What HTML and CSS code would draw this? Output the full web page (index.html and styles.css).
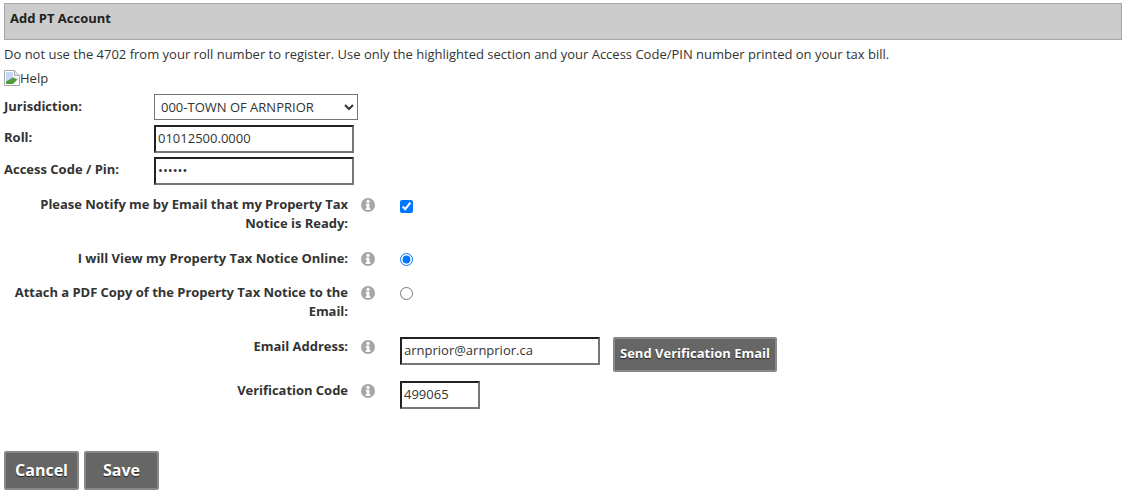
FILE: index.html
```html
<!DOCTYPE html>
<html lang="en">
<head>
<meta charset="utf-8">
<title>Add PT Account</title>
<link rel="stylesheet" href="styles.css">
</head>
<body>
<form class="page">
  <div class="title-bar">Add PT Account</div>
  <p class="note">Do not use the 4702 from your roll number to register. Use only the highlighted section and your Access Code/PIN number printed on your tax bill.</p>
  <div class="help">
    <svg class="broken" width="16" height="16" viewBox="0 0 16 16"><path d="M.5.500h10l5 5v10H.5z" fill="#fff" stroke="#a9a9a9"/><path d="M10.500.500v5h5" fill="#e8e8e8" stroke="#a9a9a9"/><path d="M2 2h7v5l5 1v3H2z" fill="#c8d8f4"/><path d="M2 14v-2.500l7-4 5 2.500v4z" fill="#4f9a3a"/><path d="M8 15l7-7v7z" fill="#fff"/></svg><span>Help</span>
  </div>
  <div class="basic-row first">
    <label class="basic-label">Jurisdiction:</label>
    <select class="select"><option>000-TOWN OF ARNPRIOR</option></select>
  </div>
  <div class="basic-row">
    <label class="basic-label">Roll:</label>
    <input class="input input-wide" type="text" value="01012500.0000">
  </div>
  <div class="basic-row">
    <label class="basic-label">Access Code / Pin:</label>
    <input class="input input-wide" type="password" value="123456">
  </div>

  <div class="opt-row opt-notify">
    <label class="opt-label">Please Notify me by Email that my Property Tax Notice is Ready:</label>
    <svg class="info" viewBox="0 0 14 14"><circle cx="7" cy="7" r="7" fill="#a6a6a6"/><circle cx="7" cy="3.400" r="1.600" fill="#fff"/><path d="M4.800 5.800h3.600v4.400h1v1.800H4.700v-1.800h1V7.500h-.9z" fill="#fff"/></svg>
    <input class="check" type="checkbox" checked>
  </div>
  <div class="opt-row opt-view">
    <label class="opt-label">I will View my Property Tax Notice Online:</label>
    <svg class="info" viewBox="0 0 14 14"><circle cx="7" cy="7" r="7" fill="#a6a6a6"/><circle cx="7" cy="3.400" r="1.600" fill="#fff"/><path d="M4.800 5.800h3.600v4.400h1v1.800H4.700v-1.800h1V7.500h-.9z" fill="#fff"/></svg>
    <input class="check radio" type="radio" name="delivery" checked>
  </div>
  <div class="opt-row opt-attach">
    <label class="opt-label">Attach a PDF Copy of the Property Tax Notice to the Email:</label>
    <svg class="info" viewBox="0 0 14 14"><circle cx="7" cy="7" r="7" fill="#a6a6a6"/><circle cx="7" cy="3.400" r="1.600" fill="#fff"/><path d="M4.800 5.800h3.600v4.400h1v1.800H4.700v-1.800h1V7.500h-.9z" fill="#fff"/></svg>
    <input class="check radio" type="radio" name="delivery">
  </div>
  <div class="opt-row opt-email">
    <label class="opt-label">Email Address:</label>
    <svg class="info" viewBox="0 0 14 14"><circle cx="7" cy="7" r="7" fill="#a6a6a6"/><circle cx="7" cy="3.400" r="1.600" fill="#fff"/><path d="M4.800 5.800h3.600v4.400h1v1.800H4.700v-1.800h1V7.500h-.9z" fill="#fff"/></svg>
    <div class="email-group">
      <input class="input input-email" type="text" value="arnprior@arnprior.ca">
      <button class="btn btn-small" type="button">Send Verification Email</button>
    </div>
  </div>
  <div class="opt-row opt-code">
    <label class="opt-label">Verification Code</label>
    <svg class="info" viewBox="0 0 14 14"><circle cx="7" cy="7" r="7" fill="#a6a6a6"/><circle cx="7" cy="3.400" r="1.600" fill="#fff"/><path d="M4.800 5.800h3.600v4.400h1v1.800H4.700v-1.800h1V7.500h-.9z" fill="#fff"/></svg>
    <input class="input input-code" type="text" value="499065">
  </div>

  <div class="actions">
    <button class="btn btn-large" type="button">Cancel</button>
    <button class="btn btn-large" type="button">Save</button>
  </div>
</form>
</body>
</html>
```

FILE: styles.css
```css
* { box-sizing: border-box; }
html, body { margin: 0; padding: 0; background: #fff; }
body {
  font-family: "Open Sans", "Liberation Sans", sans-serif;
  font-size: 13px;
  color: #333;
  overflow: hidden;
}
.page { padding: 3px 1px 0 4px; }
.title-bar {
  height: 37px;
  background: #ccc;
  border: 1px solid #a6a6a6;
  padding: 6px 5px;
  font-size: 13px;
  line-height: 17px;
  font-weight: 700;
  color: #222;
}
.note { margin: 5px 0 0; line-height: 18px; height: 18px; white-space: nowrap; }
.help { display: flex; align-items: center; height: 18px; margin-top: 6px; }
.broken { flex: none; }
.basic-row { display: flex; align-items: flex-start; margin-top: 4px; }
.basic-row.first { margin-top: 7px; }
.basic-row + .basic-row { margin-top: 5px; }
.basic-row + .basic-row + .basic-row { margin-top: 4px; }
.basic-label { width: 150px; font-weight: 700; line-height: 18px; padding-top: 3px; color: #333; }
.select {
  width: 204px;
  height: 26px;
  padding: 0 2px;
  font: 13px "Open Sans", sans-serif;
  color: #333;
  background: #fff;
  border: 1px solid #767676;
  border-radius: 0;
}
.input {
  height: 28px;
  padding: 0 2px 2px;
  font: 13px "Open Sans", sans-serif;
  color: #333;
  background: #fff;
  border: 2px solid;
  border-color: #222 #767676 #767676 #222;
  outline: 0;
}
.input-wide { width: 200px; }
.input-email { width: 200px; }
.input-code { width: 80px; }
.opt-row { display: grid; grid-template-columns: 344px 14px 1fr; column-gap: 13px; align-items: start; }
.opt-label { font-weight: 700; line-height: 19px; text-align: right; padding-left: 9px; letter-spacing: -0.03px; }
.info { width: 14px; height: 14px; margin-top: 3px; }
.check { width: 13px; height: 13px; margin: 5px 0 0 12px; accent-color: #0075ff; }
.check.radio { margin-top: 4px; }
.opt-notify { margin-top: 10px; height: 47px; }
.opt-view { margin-top: 7px; height: 34px; }
.opt-attach { height: 54px; }
.opt-email { height: 44px; }
.email-group { display: flex; align-items: flex-start; gap: 13px; margin-left: 12px; }
.opt-code .input-code { margin-left: 12px; }
.opt-code { height: 70px; }
.btn {
  background: #666;
  color: #fff;
  font-family: "Open Sans", sans-serif;
  font-weight: 700;
  border: 2px solid #888;
  border-radius: 2px;
  padding: 0;
  text-shadow: 0 1px 1px #222;
}
.btn-small { width: 164px; height: 35px; font-size: 13px; padding-bottom: 4px; }
.actions { display: flex; gap: 5px; }
.btn-large { width: 75px; height: 39px; font-size: 16px; padding-bottom: 2px; }
```
